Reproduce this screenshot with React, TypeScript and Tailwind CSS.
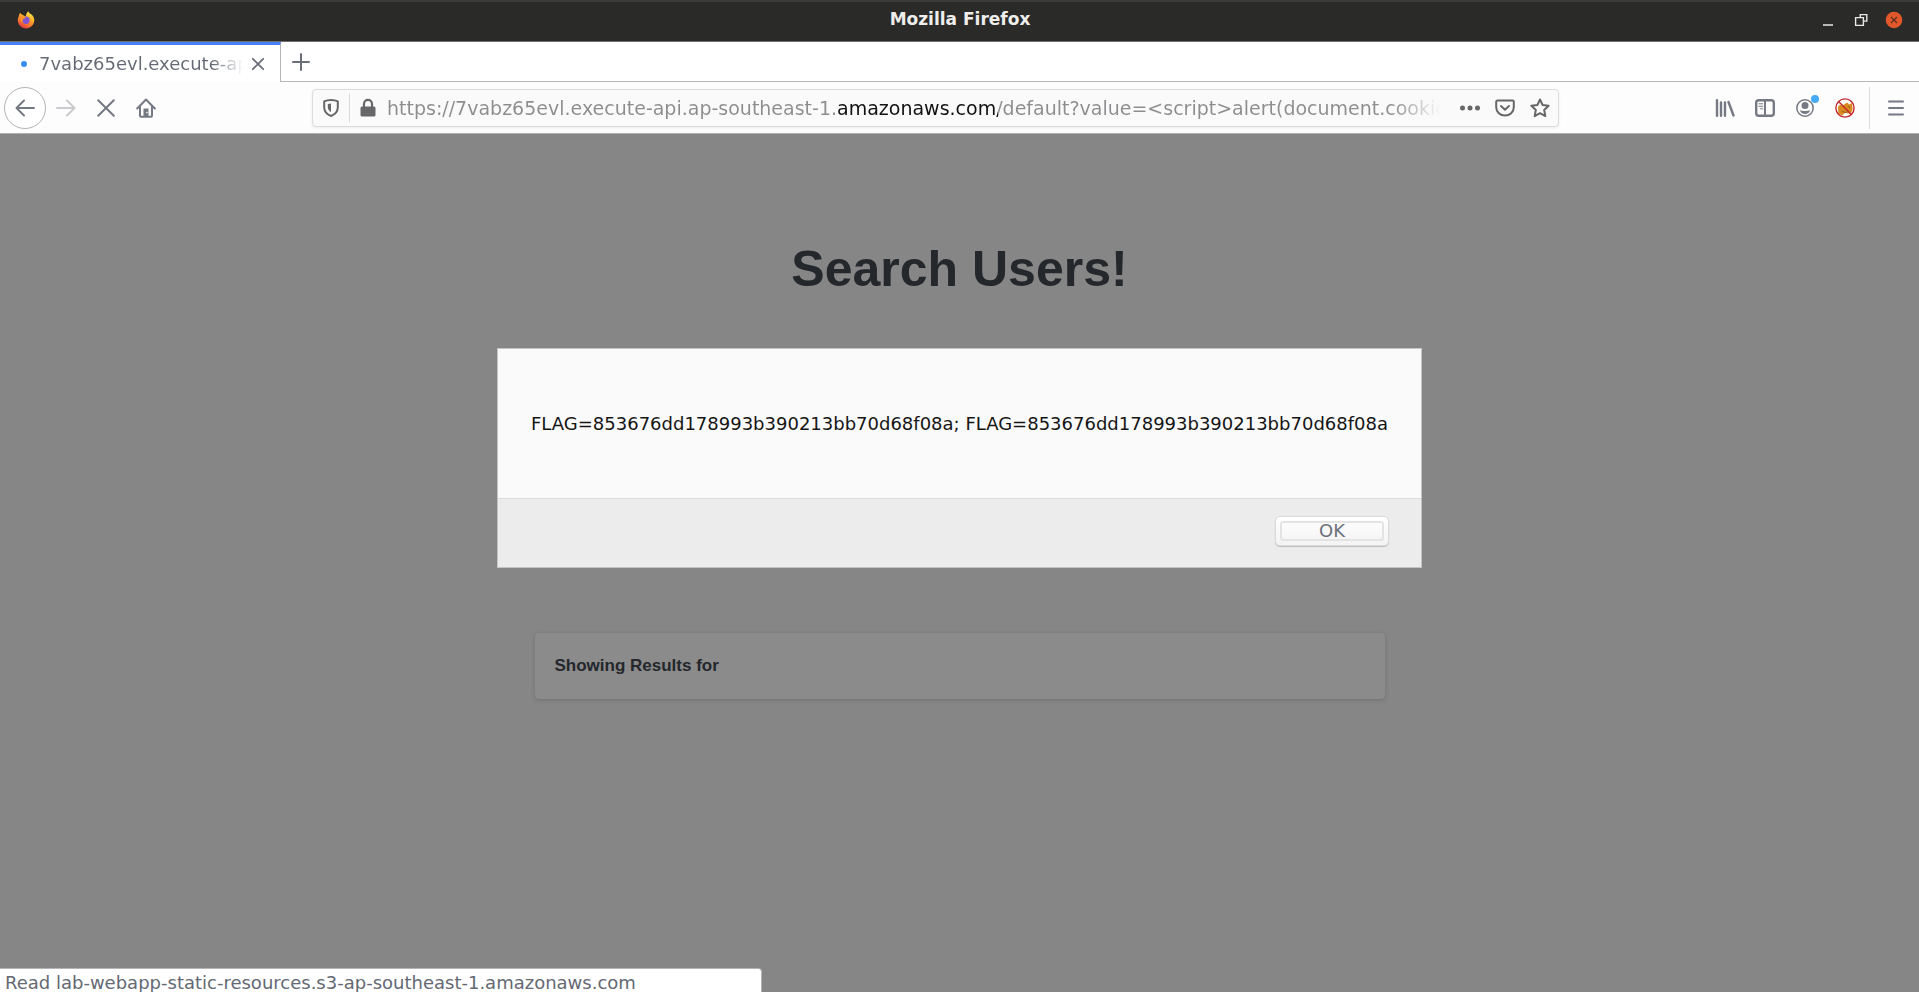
import React from "react";

const FOX_FONT = "font-['DejaVu_Sans',sans-serif]";

function Firefox() {
  return (
    <svg width="18" height="18" viewBox="0 0 18 18" aria-hidden="true">
      <defs>
        <linearGradient id="fx" x1="0.8" y1="0.05" x2="0.3" y2="1">
          <stop offset="0" stopColor="#fff04a" />
          <stop offset="0.35" stopColor="#ffb02c" />
          <stop offset="0.7" stopColor="#f5722f" />
          <stop offset="1" stopColor="#dd3346" />
        </linearGradient>
      </defs>
      <path
        d="M3 1.8C3.6 2.6 4.2 3.200 5 3.400 6.200 4 7.500 5 8.500 5.400 9 5 9 3.400 9.600 2.400 10 1.500 10.500.8 11.300.2 11.600 1.600 13 2.400 14.200 3.200 16.200 4.800 17.400 7 17.300 9.600 17.100 14 13.600 17.400 9 17.400 4.400 17.400.9 14 .8 9.600.7 8 1.100 6.400 1.800 5.200 2 4 2.300 2.800 3 1.800Z"
        fill="url(#fx)"
      />
      <circle cx="9" cy="9.200" r="3.700" fill="#8155cf" />
      <path d="M3 6.200C4.500 5 7 5.200 8.800 6.600 8 7.800 6.800 7.600 5.800 8.400 5.400 9.600 5.600 10.400 6.200 11.400 3.600 10.600 2.600 8.400 3 6.200Z" fill="#ff9226" />
    </svg>
  );
}

function ToolButton({ label, children }: { label: string; children: React.ReactNode }) {
  return (
    <button type="button" aria-label={label} className="flex h-10 w-10 shrink-0 items-center justify-center text-[#757983]">
      {children}
    </button>
  );
}

const stroke = { fill: "none", stroke: "currentColor", strokeWidth: 2, strokeLinecap: "round", strokeLinejoin: "round" } as const;

function TitleBar() {
  return (
    <header className="flex h-[42px] items-center border-t-2 border-b border-t-[#3b3b3a] border-b-[#6f6f6e] bg-[#2a2a28] px-[16px] pb-[3px]">
      <div className="flex flex-1 items-center pl-px">
        <Firefox />
      </div>
      <h2 className="pb-[2px] text-[17px] leading-6 font-bold text-[#eeeeec]">Mozilla Firefox</h2>
      <div className="flex flex-1 items-center justify-end gap-[15px]">
        <button type="button" aria-label="Minimize" className="flex h-[18px] w-[18px]">
          <svg width="18" height="18" viewBox="0 0 18 18"><path d="M4 14h10" stroke="#e8e8e6" strokeWidth="1.500" /></svg>
        </button>
        <button type="button" aria-label="Restore" className="flex h-[18px] w-[18px]">
          <svg width="18" height="18" viewBox="0 0 18 18" fill="none" stroke="#e8e8e6" strokeWidth="1.400">
            <path d="M3.600 6.600h7.800v7.800H3.600z M8.300 6.400V3.600h6.500v6.500h-3.200" />
          </svg>
        </button>
        <button type="button" aria-label="Close" className="flex h-[18px] w-[18px]">
          <svg width="18" height="18" viewBox="0 0 18 18">
            <circle cx="9" cy="9" r="8.300" fill="#e2582b" />
            <path d="M6 6l6 6M12 6l-6 6" stroke="#5c301e" strokeWidth="1.200" />
          </svg>
        </button>
      </div>
    </header>
  );
}

function TabStrip() {
  return (
    <div className="flex h-[40px]">
      <div className="flex w-[281px] items-center border-t-3 border-r border-t-[#4582f5] border-r-[#b5b5b5] bg-white pr-[12px] pl-[21px]">
        <span className="h-[6px] w-[6px] shrink-0 rounded-full bg-[#3b8cf8]" />
        <span className="ml-[12px] flex-1 overflow-hidden bg-linear-to-r from-[#646973] from-85% to-transparent bg-clip-text text-[18px] leading-6 whitespace-nowrap text-transparent">
          7vabz65evl.execute-api.ap-southeast-1
        </span>
        <button type="button" aria-label="Close tab" className="ml-[5px] flex h-5 w-5 items-center justify-center text-[#6b6f78]">
          <svg width="14" height="14" viewBox="0 0 14 14"><path d="M1.800 1.800l10.400 10.400M12.200 1.800L1.800 12.200" {...stroke} strokeWidth="1.800" /></svg>
        </button>
      </div>
      <div className="flex flex-1 items-center border-b border-[#b8b8b8] pl-[10px]">
        <button type="button" aria-label="New tab" className="flex h-5 w-5 items-center justify-center text-[#6b6f78]">
          <svg width="20" height="20" viewBox="0 0 20 20"><path d="M10 2v16M2 10h16" {...stroke} /></svg>
        </button>
      </div>
    </div>
  );
}

function AddressBar() {
  return (
    <div className="mx-[146px] flex h-[38px] min-w-0 flex-1 items-center rounded-[4px] border border-[#dcdcdd] bg-[#fafafa] text-[#67676a] shadow-[0_1px_3px_rgba(0,0,0,0.08)]">
      <button type="button" aria-label="Tracking protection" className="flex h-full w-[36px] shrink-0 items-center justify-center">
        <svg width="18" height="20" viewBox="0 0 18 20">
          <path d="M9 2C11.500 2 14 2.500 15.800 3.400V9.500C15.600 13.600 13 16.600 9 18 5 16.600 2.400 13.600 2.200 9.500V3.400C4 2.500 6.500 2 9 2Z" {...stroke} />
          <path d="M9 5.600v8.500C7 13 6 11.400 5.800 9V6.100C6.800 5.800 7.900 5.600 9 5.600Z" fill="currentColor" />
        </svg>
      </button>
      <span className="h-7 w-px shrink-0 bg-[#d8d8d9]" />
      <button type="button" aria-label="Connection secure" className="flex h-full w-[36px] shrink-0 items-center justify-center">
        <svg width="16" height="20" viewBox="0 0 16 20">
          <path d="M4 9V5.800a4 4 0 0 1 8 0V9" fill="none" stroke="currentColor" strokeWidth="2.200" />
          <rect x=".500" y="8.500" width="15" height="10" rx="1.500" fill="currentColor" />
        </svg>
      </button>
      <input
        type="text"
        readOnly
        aria-label="Address"
        value="https://7vabz65evl.execute-api.ap-southeast-1.amazonaws.com/default?value=<script>alert(document.cookie)</script>"
        className="min-w-0 flex-1 bg-[linear-gradient(to_right,#8d8d8f_452px,#111112_452px,#111112_612px,#8d8d8f_612px,#8d8d8f_calc(100%-60px),transparent_calc(100%-12px))] bg-clip-text pl-px text-[19px] leading-7 text-transparent outline-none"
      />
      <button type="button" aria-label="Page actions" className="flex h-full w-[36px] shrink-0 items-center justify-center">
        <svg width="20" height="6" viewBox="0 0 20 6" fill="currentColor"><circle cx="2.500" cy="3" r="2.500" /><circle cx="10" cy="3" r="2.500" /><circle cx="17.500" cy="3" r="2.500" /></svg>
      </button>
      <button type="button" aria-label="Save to Pocket" className="flex h-full w-[34px] shrink-0 items-center justify-center">
        <svg width="20" height="18" viewBox="0 0 20 18"><path d="M2.500 1.500h15a1.300 1.300 0 0 1 1.300 1.300v5.500a8.800 8.300 0 0 1-17.600 0V2.800a1.300 1.300 0 0 1 1.300-1.300Z M6 7l4 3.700L14 7" {...stroke} /></svg>
      </button>
      <button type="button" aria-label="Bookmark" className="mr-px flex h-full w-[35px] shrink-0 items-center justify-center">
        <svg width="20" height="20" viewBox="0 0 20 20"><path d="M10 1.500l2.600 5.500 6 .8-4.400 4.200 1.100 6.100L10 15.200l-5.300 2.900 1.100-6.100L1.400 7.800l6-.8Z" {...stroke} /></svg>
      </button>
    </div>
  );
}

function NavBar() {
  return (
    <nav className="flex h-[52px] items-center border-b border-[#b0b0b0] bg-[#fdfdfd] pr-[3px] pl-1">
      <button type="button" aria-label="Back" className="flex h-[42px] w-[42px] shrink-0 items-center justify-center rounded-full border border-[#b4b4b6] bg-white text-[#757983]">
        <svg width="20" height="18" viewBox="0 0 20 18"><path d="M19 9H1.500M9 1.500L1.500 9 9 16.500" {...stroke} /></svg>
      </button>
      <ToolButton label="Forward">
        <svg className="text-[#cacbce]" width="20" height="18" viewBox="0 0 20 18"><path d="M1 9h17.500M11 1.500L18.500 9 11 16.500" {...stroke} /></svg>
      </ToolButton>
      <ToolButton label="Stop">
        <svg width="18" height="18" viewBox="0 0 18 18"><path d="M1.200 1.200l15.600 15.600M16.800 1.200L1.200 16.800" {...stroke} /></svg>
      </ToolButton>
      <ToolButton label="Home">
        <svg width="20" height="20" viewBox="0 0 20 20">
          <path d="M1.200 10.500L10 1.500l8.800 9M4 9v8.800a1 1 0 0 0 1 1h10a1 1 0 0 0 1-1V9" {...stroke} />
          <path d="M7.500 18v-7.500h5V18z" fill="currentColor" />
          <circle cx="11" cy="14.500" r=".8" fill="#fff" />
        </svg>
      </ToolButton>
      <AddressBar />
      <ToolButton label="Library">
        <svg width="20" height="18" viewBox="0 0 20 18" fill="none" stroke="currentColor" strokeWidth="2.400" strokeLinecap="round">
          <path d="M2 1.200v15.600M6 3.500v13.300M10 3.500v13.300M13.500 3l5 13.500" />
        </svg>
      </ToolButton>
      <ToolButton label="Sidebars">
        <svg width="20" height="18" viewBox="0 0 20 18">
          <rect x="1.200" y="1.200" width="17.600" height="15.600" rx="2.500" {...stroke} strokeWidth="2.400" />
          <path d="M10 1.500v15" {...stroke} />
          <path d="M4 4.800h3.800M4 7.300h3.800M5.500 9.800h2.300" {...stroke} strokeWidth="1" />
        </svg>
      </ToolButton>
      <ToolButton label="Account">
        <span className="relative flex">
          <svg width="18" height="18" viewBox="0 0 18 18">
            <circle cx="9" cy="9" r="8.200" fill="none" stroke="currentColor" strokeWidth="1.500" />
            <circle cx="9" cy="6.500" r="3.500" fill="currentColor" />
            <path d="M3.800 11.200C5.500 12.300 12.500 12.300 14.200 11.200 13.500 13.600 11.500 15 9 15s-4.500-1.400-5.200-3.800Z" fill="currentColor" />
          </svg>
          <span className="absolute -top-1 -right-[5px] h-2 w-2 rounded-full bg-[#45aaf8]" />
        </span>
      </ToolButton>
      <ToolButton label="Proxy disabled">
        <svg width="20" height="20" viewBox="0 0 20 20">
          <path d="M3 9.500C3.500 7 6 6.500 8.500 7L10.500 5.500 12.500 4.500 14 6.500 17 5C17 8 18.200 10 17.200 12.500L15 16 10 14.500 7.500 17.500 3.500 15.500Z" fill="#d98a1e" />
          <path d="M7 13l3 1.500 4-1M13 8.500l2 1" stroke="#9c5b12" strokeWidth="1" fill="none" />
          <circle cx="10" cy="10" r="9.100" fill="none" stroke="#c5262b" strokeWidth="1.400" />
          <path d="M3.600 3.600l12.800 12.800" stroke="#c5262b" strokeWidth="1.400" />
        </svg>
      </ToolButton>
      <span className="mx-[4px] h-[42px] w-px shrink-0 bg-[#dcdcdd]" />
      <span className="ml-[2px] flex">
        <ToolButton label="Open menu">
          <svg width="16" height="16" viewBox="0 0 16 16"><path d="M1 1.500h14M1 8h14M1 14.500h14" {...stroke} /></svg>
        </ToolButton>
      </span>
    </nav>
  );
}

function AlertDialog() {
  return (
    <div className="absolute inset-x-0 top-[214px] flex justify-center">
      <div role="alertdialog" aria-labelledby="alert-text" className="w-full max-w-[925px] border border-[#c4c4c4] bg-[#fafafa]">
        <p id="alert-text" className="border-b border-[#dcdcdc] px-[25px] py-[62px] text-center text-[18px] leading-[25px] text-[#151515]">
          FLAG=853676dd178993b390213bb70d68f08a; FLAG=853676dd178993b390213bb70d68f08a
        </p>
        <div className="flex justify-end bg-[#ececec] px-[32px] pt-[17px] pb-[21px]">
          <button type="button" className="rounded-[5px] border border-[#dadada] bg-linear-to-b from-white to-[#f3f3f3] p-1 shadow-[0_1px_1px_rgba(0,0,0,0.2)]">
            <span className="flex h-5 w-[104px] items-center justify-center rounded-[3px] border-2 border-[#e3e3e4] text-[18px] leading-5 text-[#6c707a]">OK</span>
          </button>
        </div>
      </div>
    </div>
  );
}

export default function App() {
  return (
    <div className={`flex min-h-screen flex-col bg-white ${FOX_FONT}`}>
      <TitleBar />
      <TabStrip />
      <NavBar />
      <main className="relative flex flex-1 flex-col items-center bg-[#868686] pt-[105px] font-['Liberation_Sans',Arial,sans-serif] text-[#24272b]">
        <h1 className="text-[50px] leading-[60px] font-bold">Search Users!</h1>
        <section className="mt-[334px] w-full max-w-[850px] rounded-[4px] bg-[#8b8b8b] px-5 py-[21px] shadow-[0_1px_4px_rgba(0,0,0,0.18)]">
          <p className="text-[17px] leading-6 font-bold">Showing Results for</p>
        </section>
        <div className={FOX_FONT}>
          <AlertDialog />
          <div role="status" className="absolute bottom-0 left-0 h-6 w-[762px] overflow-hidden rounded-tr-[4px] border-t border-r border-[#b4b4b4] bg-white pl-[5px] text-[18px] leading-[28px] whitespace-nowrap text-[#646973]">
            Read lab-webapp-static-resources.s3-ap-southeast-1.amazonaws.com
          </div>
        </div>
      </main>
    </div>
  );
}
